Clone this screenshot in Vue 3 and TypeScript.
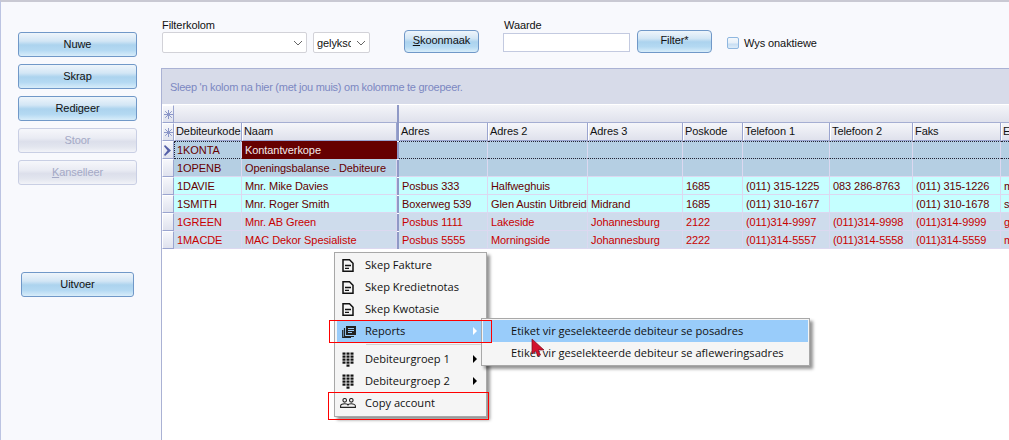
<script setup lang="ts">
interface Row { cells: string[]; tone: string; current?: boolean }
const headers = ['Debiteurkode','Naam','','Adres','Adres 2','Adres 3','Poskode','Telefoon 1','Telefoon 2','Faks','E-pos']
const rows: Row[] = [
  { tone:'blue', current:true, cells:['1KONTA','Kontantverkope','','','','','','','','',''] },
  { tone:'blue', cells:['1OPENB','Openingsbalanse - Debiteure','','','','','','','','',''] },
  { tone:'cyan', cells:['1DAVIE','Mnr. Mike Davies','','Posbus 333','Halfweghuis','','1685','(011) 315-1225','083 286-8763','(011) 315-1226','mike@mail'] },
  { tone:'cyan', cells:['1SMITH','Mnr. Roger Smith','','Boxerweg 539','Glen Austin Uitbreidi','Midrand','1685','(011) 310-1677','','(011) 310-1678','sales@mail'] },
  { tone:'red', cells:['1GREEN','Mnr. AB Green','','Posbus 1111','Lakeside','Johannesburg','2122','(011)314-9997','(011)314-9998','(011)314-9999','green@mail'] },
  { tone:'red', cells:['1MACDE','MAC Dekor Spesialiste','','Posbus 5555','Morningside','Johannesburg','2222','(011)314-5557','(011)314-5558','(011)314-5559','mac@mail'] },
]
const docItems = ['Skep Fakture','Skep Kredietnotas','Skep Kwotasie']
const groupItems = ['Debiteurgroep 1','Debiteurgroep 2']
const dots = [0,1,2,3,4,5,6,7,8,9,10,11].map(i => ({ x: 0.5 + (i % 3) * 4, y: 0.5 + Math.floor(i / 3) * 3 }))
</script>

<template>
  <div class="window">
    <aside class="side">
      <div class="btn-stack">
        <button class="btn">Nuwe</button>
        <button class="btn">Skrap</button>
        <button class="btn">Redigeer</button>
        <button class="btn off">Stoor</button>
        <button class="btn off"><u>K</u>anselleer</button>
      </div>
      <button class="btn run">Uitvoer</button>
    </aside>

    <main class="main">
      <div class="filters">
        <div class="field f-col">
          <label>Filterkolom</label>
          <div class="selects">
            <div class="select s1"><svg width="10" height="6" viewBox="0 0 10 6"><path d="M1 1l4 4 4-4" fill="none" stroke="#666" stroke-width="1"/></svg></div>
            <div class="select s2"><span>gelyksoortig</span><svg width="10" height="6" viewBox="0 0 10 6"><path d="M1 1l4 4 4-4" fill="none" stroke="#666" stroke-width="1"/></svg></div>
          </div>
        </div>
        <button class="btn small clean"><u>S</u>koonmaak</button>
        <div class="field f-val">
          <label>Waarde</label>
          <div class="input"></div>
        </div>
        <button class="btn small filter">Filter*</button>
        <span class="check"></span>
        <span class="check-label">Wys onaktiewe</span>
      </div>

      <section class="grid">
        <div class="group">Sleep 'n kolom na hier (met jou muis) om kolomme te groepeer.</div>
        <div class="white-line"></div>
        <div class="row bands">
          <div class="ind head"><svg width="9" height="9" viewBox="0 0 9 9"><path d="M4.5 0v9M0 4.5h9M1.2 1.2l6.6 6.6M7.8 1.2L1.2 7.8" stroke="#8b96c8" stroke-width="1"/></svg></div>
          <div class="band b-left"></div>
          <div class="split"></div>
          <div class="band b-right"></div>
        </div>
        <div class="row cols">
          <div class="ind head"><svg width="9" height="9" viewBox="0 0 9 9"><path d="M4.5 0v9M0 4.5h9M1.2 1.2l6.6 6.6M7.8 1.2L1.2 7.8" stroke="#8b96c8" stroke-width="1"/></svg></div>
          <template v-for="(h, i) in headers" :key="i">
            <div v-if="i === 2" class="split"></div>
            <div v-else class="hcell">{{ h }}</div>
          </template>
        </div>
        <div v-for="r in rows" :key="r.cells[0]" class="row data" :class="[r.tone, { current: r.current }]">
          <div class="ind">
            <svg v-if="r.current" width="8" height="11" viewBox="0 0 8 11"><path d="M1 0l6 5.5L1 11l-1-1.2 3.5-4.3L0 1.2z" fill="#5560a8"/></svg>
          </div>
          <template v-for="(c, i) in r.cells" :key="i">
            <div v-if="i === 2" class="split"></div>
            <div v-else class="cell" :class="{ picked: r.current && i === 1, focus: r.current && i === 0 }">{{ c }}</div>
          </template>
        </div>
      </section>
    </main>

    <div class="menu menu-main">
      <div v-for="d in docItems" :key="d" class="item">
        <svg class="ico doc" width="12" height="13" viewBox="0 0 12 13"><path d="M1 .8h6.500L11 4.300v7.900H1z" fill="none" stroke="#111" stroke-width="1.500"/><path d="M3 6.500h6M3 9.300h4" stroke="#111" stroke-width="1.300"/></svg>
        <span>{{ d }}</span>
      </div>
      <div class="item hot">
        <svg class="ico rep" width="14" height="12" viewBox="0 0 14 12"><path d="M4 0h10v9H4z" fill="#222"/><path d="M6 2.500h6M6 4.500h6M6 6.500h4" stroke="#9accf8" stroke-width="1"/><path d="M2.500 2v8.500H12M.7 4v7.400H9" fill="none" stroke="#222" stroke-width="1.200"/></svg>
        <span>Reports</span>
        <i class="arrow light"></i>
      </div>
      <div class="sep"></div>
      <div v-for="g in groupItems" :key="g" class="item">
        <svg class="ico pad" width="12" height="15" viewBox="0 0 12 15"><rect v-for="(p, k) in dots" :key="k" :x="p.x" :y="p.y" width="3" height="2.200" fill="#111"/><rect x="4.500" y="12.500" width="3" height="2.200" fill="#111"/></svg>
        <span>{{ g }}</span>
        <i class="arrow"></i>
      </div>
      <div class="item">
        <svg class="ico people" width="16" height="10" viewBox="0 0 16 10"><circle cx="4.700" cy="2.300" r="1.800" fill="none" stroke="#222" stroke-width="1.100"/><circle cx="11.300" cy="2.300" r="1.800" fill="none" stroke="#222" stroke-width="1.100"/><path d="M.6 9.400V8C.6 6.700 2.500 5.800 4.700 5.800 6.500 5.800 8 6.400 8 7.500 8 6.400 9.500 5.800 11.300 5.800 13.500 5.800 15.400 6.700 15.400 8v1.400z" fill="none" stroke="#222" stroke-width="1.100"/></svg>
        <span>Copy account</span>
      </div>
    </div>

    <div class="menu menu-sub">
      <div class="sub-item hot">Etiket vir geselekteerde debiteur se posadres</div>
      <div class="sub-item">Etiket vir geselekteerde debiteur se afleweringsadres</div>
    </div>

    <div class="mark mark-reports"></div>
    <div class="mark mark-copy"></div>
    <svg class="pointer" width="14" height="20" viewBox="0 0 14 20"><path d="M1 1v15l3.500-3 2.500 5 2.500-1-2.300-5H13z" fill="#d3122f" stroke="#7a0c1e" stroke-width=".7"/></svg>
  </div>
</template>

<style>
html, body { margin: 0; background: #f8f9fd; }
</style>

<style scoped>
.window {
  position: relative;
  width: 1009px;
  height: 440px;
  box-sizing: border-box;
  overflow: hidden;
  display: flex;
  background: #f8f9fd;
  border-top: 2px solid #c9c9d3;
  border-left: 1px solid #bcc4e2;
  font-family: "Liberation Sans", Tahoma, sans-serif;
  font-size: 11px;
  letter-spacing: -0.08px;
  color: #111;
}
.side {
  width: 160px;
  flex: none;
  box-sizing: border-box;
  padding: 30px 0 0 17px;
  display: flex;
  flex-direction: column;
}
.btn-stack { display: flex; flex-direction: column; gap: 7px; }
.btn {
  box-sizing: border-box;
  width: 119px;
  height: 25px;
  padding: 0 0 2px;
  font: inherit;
  letter-spacing: inherit;
  color: #111;
  border: 1px solid #7098c8;
  border-radius: 3px;
  background: linear-gradient(#eef5fb 0%, #d3e6f5 35%, #acd3ee 52%, #b4d9f2 75%, #d8edfa 100%);
  text-align: center;
}
.btn.off {
  color: #a4a9c6;
  border-color: #c9cfe4;
  background: linear-gradient(#f6f7fb 0%, #e9ebf3 40%, #dcdfeb 55%, #e3e6ef 78%, #f2f3f8 100%);
}
.btn.run { width: 113px; margin: 87px 0 0 3px; }
.main { flex: 1; min-width: 0; display: flex; flex-direction: column; }
.filters { height: 66px; flex: none; display: flex; position: relative; }
.field { display: flex; flex-direction: column; }
.field label { line-height: 14px; padding-top: 16px; height: 14px; margin-bottom: 0; }
.f-col { padding-left: 1px; }
.selects { display: flex; gap: 6px; }
.select {
  box-sizing: border-box;
  height: 21px;
  background: #fff;
  border: 1px solid #d2d2d8;
  border-radius: 2px;
  display: flex;
  align-items: center;
  justify-content: flex-end;
  padding-right: 3px;
  overflow: hidden;
}
.s1 { width: 145px; }
.s2 { width: 57px; }
.s2 span { flex: 1; min-width: 0; padding-left: 3px; overflow: hidden; white-space: nowrap; width: 36px; }
.s2 svg { flex: none; margin-left: 5px; }
.btn.small { width: 75px; height: 23px; margin-top: 28px; padding-bottom: 4px; border-radius: 4px; }
.clean { margin-left: 34px; }
.f-val { margin-left: 24px; }
.f-val label { padding-top: 16px; padding-left: 1px; }
.input { box-sizing: border-box; width: 127px; height: 19px; margin-top: 1px; background: #fff; border: 1px solid #c3cae0; }
.filter { margin-left: 7px; }
.check {
  box-sizing: border-box;
  width: 12px;
  height: 12px;
  margin: 35px 0 0 15px;
  border: 1px solid #8fb7e0;
  border-radius: 2px;
  background: linear-gradient(#f4f8fc 0%, #e6eff8 50%, #c7def3 60%, #dcebf8 100%);
}
.check-label { margin: 34px 0 0 5px; line-height: 14px; height: 14px; }
.grid { flex: 1; background: #fff; border-left: 1px solid #aab2d4; border-top: 1px solid #aab2d4; overflow: hidden; }
.group { height: 35px; line-height: 36px; box-sizing: border-box; padding-left: 8px; background: #d7dbe9; color: #7c88c2; white-space: nowrap; letter-spacing: -0.27px; }
.white-line { height: 1px; background: #fff; }
.row {
  display: grid;
  grid-template-columns: 12px 68px 155px 2px 89px 100px 95px 60px 87px 83px 88px 60px;
  height: 18px;
  white-space: nowrap;
}
.bands { grid-template-columns: 12px 223px 2px 1fr; }
.ind {
  box-sizing: border-box;
  display: flex;
  align-items: center;
  justify-content: center;
  background: linear-gradient(#f6f7fb, #dfe2ee);
  border-top: 1px solid #fff;
  border-left: 1px solid #fff;
  border-right: 1px solid #9aa4cf;
  border-bottom: 1px solid #9aa4cf;
}
.band {
  background: linear-gradient(#f4f5f9, #dfe1ec);
  border-bottom: 1px solid #a5aed2;
}
.split { background: #8f99c6; }
.data .split { box-shadow: inset 0 1px 0 #fff; }
.hcell {
  box-sizing: border-box;
  padding-left: 1px;
  line-height: 17px;
  overflow: hidden;
  border-right: 1px solid #9aa4cf;
  border-bottom: 1px solid #9aa4cf;
  border-left: 1px solid #fff;
  background: linear-gradient(#f5f6fa, #dfe1ec);
}
.cell {
  box-sizing: border-box;
  padding-left: 3px;
  line-height: 18px;
  overflow: hidden;
  border-right: 1px solid #dcd8f0;
  border-bottom: 1px solid #dcd8f0;
}
.blue .cell { background: #b5cfe3; color: #660000; }
.cyan .cell { background: #c5ffff; color: #660000; }
.red .cell { background: #cedcec; color: #c80000; }
.current .cell { border-top: 1px dotted #223; border-bottom: 1px dotted #223; line-height: 16px; }
.current .cell.focus { border-left: 1px dotted #223; padding-left: 2px; }
.current .cell.picked { background: #660000; color: #f2eaea; border-color: #660000; }
.menu {
  position: absolute;
  box-sizing: border-box;
  background: #f5f5f5;
  border: 1px solid #a8a8a8;
  box-shadow: 3px 3px 3px rgba(0, 0, 0, .42);
  font-family: "Open Sans", "Noto Sans", sans-serif;
  font-size: 11.100px;
  letter-spacing: 0;
  color: #111;
  z-index: 2;
}
.menu-main { left: 333px; top: 250px; width: 153px; height: 165px; padding: 1px 2px 2px; }
.item { position: relative; height: 22px; line-height: 21px; padding-left: 28px; white-space: nowrap; }
.ico { position: absolute; left: 5px; }
.doc { top: 5px; }
.rep { top: 6px; }
.pad { top: 4px; }
.people { left: 3px; top: 6px; }
.hot { background: #99ccfa; }
.sep { height: 1px; margin: 2px 2px 3px 29px; background: #d2d2d2; }
.arrow {
  position: absolute;
  right: 7px;
  top: 7px;
  border-left: 4px solid #000;
  border-top: 4px solid transparent;
  border-bottom: 4px solid transparent;
}
.arrow.light { border-left-color: #fff; }
.menu-sub { left: 480px; top: 316px; width: 329px; height: 48px; padding: 1px; z-index: 3; }
.sub-item { height: 22px; line-height: 21px; padding-left: 28px; white-space: nowrap; }
.mark { position: absolute; box-sizing: border-box; border: 1px solid #f00; z-index: 4; }
.mark-reports { left: 328px; top: 318px; width: 163px; height: 23px; }
.mark-copy { left: 327px; top: 390px; width: 161px; height: 28px; }
.pointer { position: absolute; left: 530px; top: 336px; z-index: 5; }
</style>
